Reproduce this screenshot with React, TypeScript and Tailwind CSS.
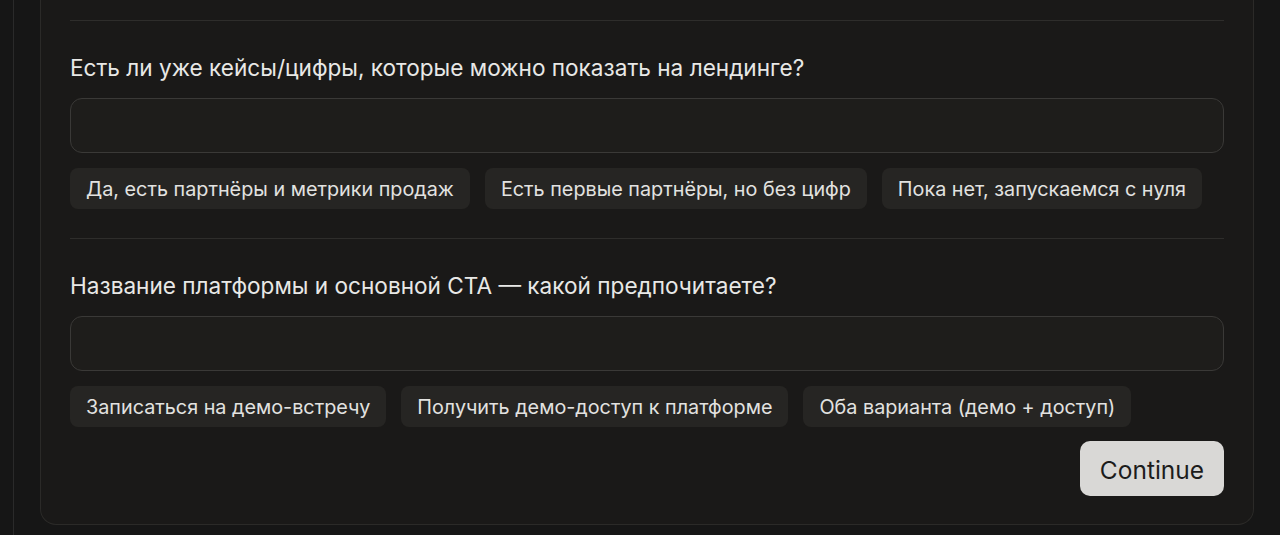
const questions = [
  {
    title: 'Есть ли уже кейсы/цифры, которые можно показать на лендинге?',
    options: [
      'Да, есть партнёры и метрики продаж',
      'Есть первые партнёры, но без цифр',
      'Пока нет, запускаемся с нуля',
    ],
  },
  {
    title: 'Название платформы и основной CTA — какой предпочитаете?',
    options: [
      'Записаться на демо-встречу',
      'Получить демо-доступ к платформе',
      'Оба варианта (демо + доступ)',
    ],
  },
];

const Question = ({ title, options }: { title: string; options: string[] }) => (
  <div className="border-t border-[#2e2d2b] pt-[33px]">
    <h3 className="text-[22.6px] leading-[28px] text-[#e8e8e6]">{title}</h3>

    <input
      type="text"
      className="mt-4 block h-[55px] w-full rounded-xl border border-[#3a3937] bg-[#1e1d1b] px-4 text-[18px] text-[#e8e8e6] outline-none"
    />

    {/* Quick answers */}
    <div className="mt-[15px] flex flex-wrap gap-[15px]">
      {options.map((opt) => (
        <button
          key={opt}
          className="h-[41px] rounded-lg bg-[#262523] px-4 pt-[3px] text-[19.8px] text-[#e2e2e0]"
        >
          {opt}
        </button>
      ))}
    </div>
  </div>
);

export default function App() {
  return (
    <div
      className="flex h-[535px] w-[1280px] overflow-hidden bg-[#161616]"
      style={{ fontFamily: 'Inter, "Noto Sans", sans-serif' }}
    >
      <div className="ml-[13px] w-px bg-[#2a2a2a]" />

      <div className="ml-[26px] mr-[26px] mb-[10px] flex-1">
        <div className="rounded-b-2xl border-x border-b border-[#2b2a28] bg-[#1a1918] px-[29px] pt-5 pb-[28px]">
          <div className="space-y-[29px]">
            {questions.map((q) => (
              <Question key={q.title} title={q.title} options={q.options} />
            ))}
          </div>

          <div className="mt-[14px] flex justify-end">
            <button className="h-[55px] w-[144px] rounded-[10px] bg-[#d9d8d6] pt-[4px] text-[24.5px] text-[#1c1c1c]">
              Continue
            </button>
          </div>
        </div>
      </div>
    </div>
  );
}
